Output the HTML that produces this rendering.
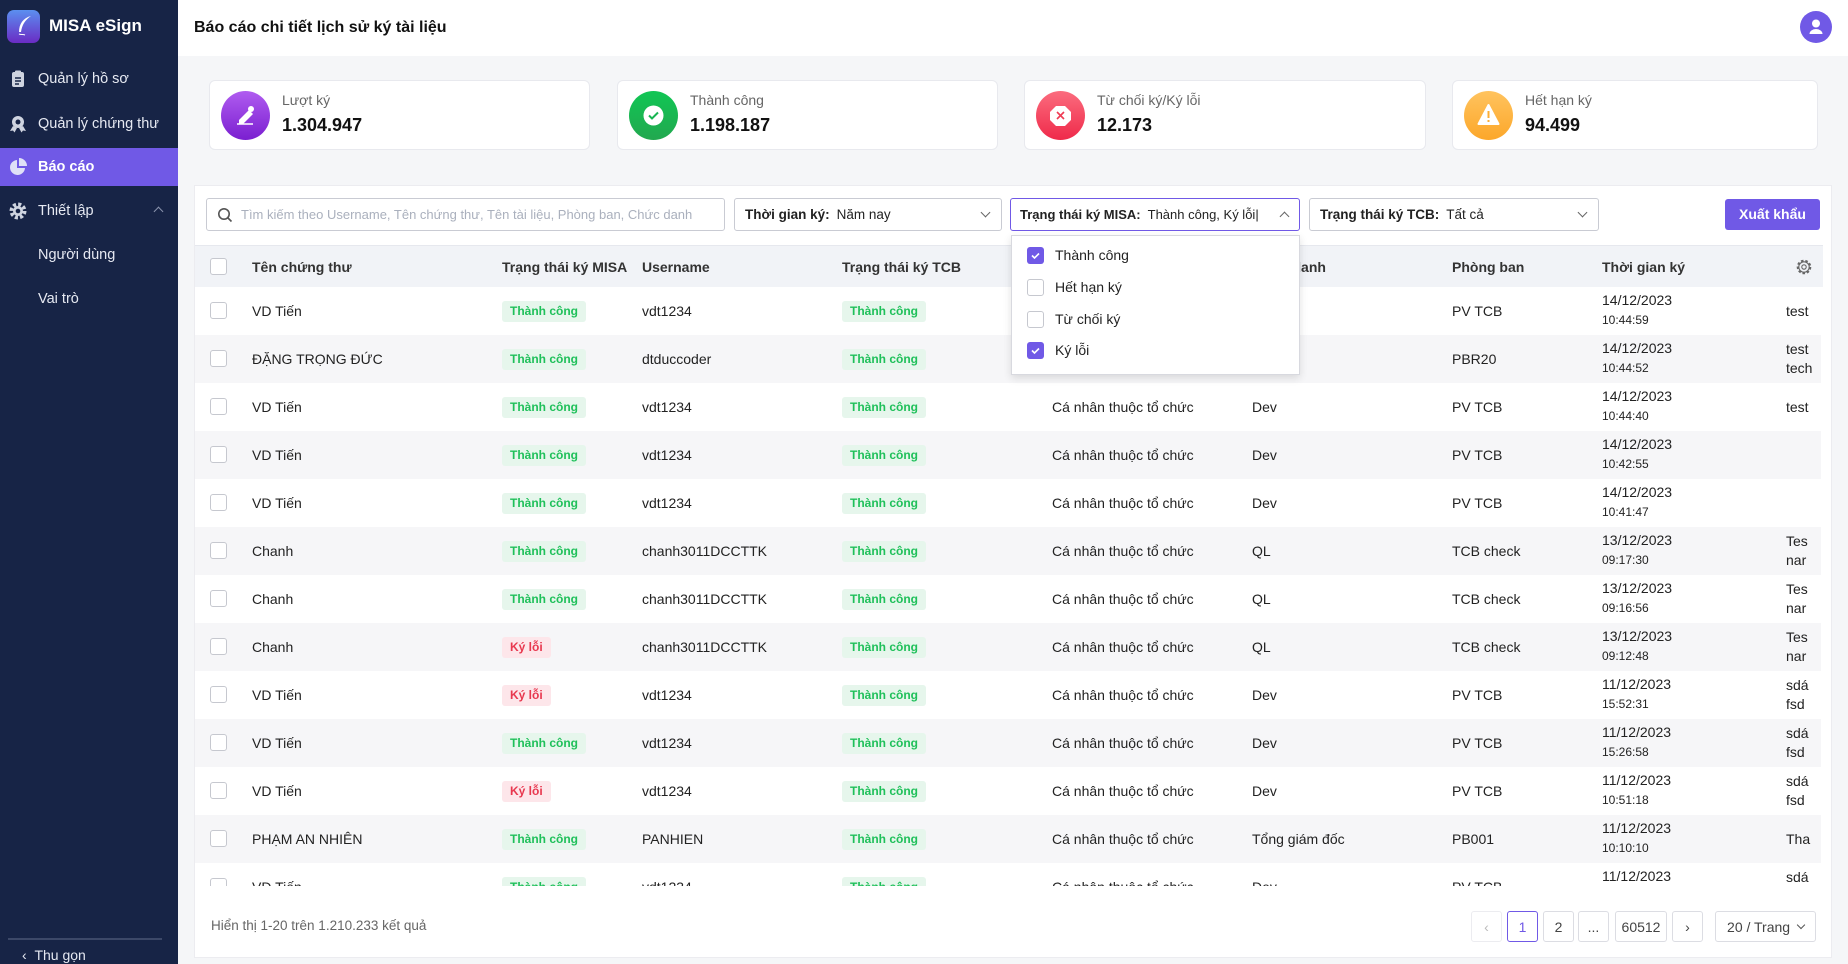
<!DOCTYPE html>
<html><head><meta charset="utf-8"><style>
*{box-sizing:border-box;margin:0;padding:0}
body{width:1848px;height:964px;overflow:hidden;background:#f5f6f8;font-family:"Liberation Sans","Noto Sans CJK SC",sans-serif;font-size:14px;color:#222;position:relative}
.a{position:absolute}
.sb{left:0;top:0;width:178px;height:964px;background:#172446;color:#e6e9f2}
.mi{position:absolute;left:0;width:178px;height:44px;display:flex;align-items:center;padding-left:38px;font-size:14.5px}
.ic{position:absolute;left:9px;top:13px;width:18px;height:18px}
.hd{left:178px;top:0;width:1670px;height:56px;background:#fff}
.card{position:absolute;top:80px;height:70px;background:#fff;border:1px solid #e8e9ee;border-radius:6px}
.circ{position:absolute;left:11px;top:10px;width:49px;height:49px;border-radius:50%}
.cl{position:absolute;left:72px;top:11px;color:#666;font-size:14px}
.cv{position:absolute;left:72px;top:34px;font-size:18px;font-weight:bold;color:#111}
.panel{left:194px;top:185px;width:1638px;height:773px;background:#fff;border:1px solid #ececf0}
.inp{position:absolute;top:198px;height:33px;border:1px solid #c9cbd3;border-radius:3px;background:#fff;display:flex;align-items:center;padding-left:10px;font-size:13.5px;white-space:nowrap;overflow:hidden}
.inp b{margin-right:7px}
.chev{position:absolute;right:12px;top:10px;width:7px;height:7px;border-right:1.3px solid #666;border-bottom:1.3px solid #666;transform:rotate(45deg)}
.cb{position:absolute;width:17px;height:17px;border:1px solid #c6c8cf;border-radius:3px;background:#fff}
.row{position:absolute;left:195px;width:1628px;height:48px}
.row span{position:absolute;white-space:nowrap}
.bd{top:14px;height:21px;padding:0 8px;border-radius:3px;font-size:12px;font-weight:bold;line-height:21px}
.g{background:#e6f6ec;color:#1fc05a}
.r{background:#fde6ea;color:#e8384f}
.th{font-weight:bold;color:#333}
.pg{position:absolute;top:911px;height:31px;border:1px solid #dcdde3;border-radius:3px;background:#fff;display:flex;align-items:center;justify-content:center;font-size:14px;color:#444}
</style></head><body>
<div class="a sb">
  <div class="a" style="left:7px;top:10px;width:33px;height:33px;border-radius:7px;background:linear-gradient(180deg,#5b8ff0,#6a2bc4)">
    <svg width="33" height="33" viewBox="0 0 33 33"><path d="M24 6C16 8 12 14 12 22l2 0C15 15 18 10 24 6z" fill="#fff"/><path d="M12 24c2 1 4 0 6 1" stroke="#fff" fill="none"/></svg>
  </div>
  <div class="a" style="left:49px;top:16px;font-size:17px;font-weight:bold;color:#fff">MISA eSign</div>
  <div class="mi" style="top:57px"><svg class="ic" viewBox="0 0 18 18"><rect x="3" y="2" width="12" height="15" rx="2" fill="#cfd4e0"/><rect x="6" y="0.5" width="6" height="3" rx="1" fill="#cfd4e0"/><path d="M6 8h6M6 11h6M6 14h4" stroke="#172446" stroke-width="1.4"/></svg>Quản lý hồ sơ</div>
  <div class="mi" style="top:102px"><svg class="ic" viewBox="0 0 18 18"><circle cx="9" cy="7" r="6" fill="#cfd4e0"/><circle cx="9" cy="7" r="2.5" fill="#172446"/><path d="M4 11l-3 5 3-.5 1.5 2L8 13M14 11l3 5-3-.5-1.5 2L10 13" fill="#cfd4e0"/></svg>Quản lý chứng thư</div>
  <div class="mi" style="top:148px;height:38px;background:#7059e6;color:#fff;font-weight:bold"><svg class="ic" style="top:10px" viewBox="0 0 18 18"><path d="M8 2A7.5 7.5 0 1 0 16 10H8z" fill="#dfe0f7"/><path d="M10 0v8h8A8 8 0 0 0 10 0z" fill="#dfe0f7"/></svg>Báo cáo</div>
  <div class="mi" style="top:189px"><svg class="ic" viewBox="0 0 18 18"><circle cx="9" cy="9" r="6.5" fill="none" stroke="#cfd4e0" stroke-width="4" stroke-dasharray="3 2.1"/><circle cx="9" cy="9" r="5" fill="#cfd4e0"/><circle cx="9" cy="9" r="2.3" fill="#172446"/></svg>Thiết lập<span style="position:absolute;left:155px;top:19px;width:7px;height:7px;border-left:1.3px solid #8a93ad;border-top:1.3px solid #8a93ad;transform:rotate(45deg)"></span></div>
  <div class="mi" style="top:233px">Người dùng</div>
  <div class="mi" style="top:277px">Vai trò</div>
  <div class="a" style="left:8px;top:938px;width:154px;height:2px;background:#3c4868"></div>
  <div class="a" style="left:22px;top:947px;font-size:14px">‹ &nbsp;Thu gọn</div>
</div>
<div class="a hd">
  <div class="a" style="left:16px;top:19px;font-size:16px;font-weight:bold;color:#111">Báo cáo chi tiết lịch sử ký tài liệu</div>
  <div class="a" style="left:1622px;top:11px;width:32px;height:32px;border-radius:50%;background:#7059e6">
    <svg width="32" height="32" viewBox="0 0 32 32"><circle cx="16" cy="12.5" r="4" fill="#fff"/><path d="M9.5 23a6.5 5 0 0 1 13 0z" fill="#fff"/></svg>
  </div>
</div>

<div class="card" style="left:209px;width:381px"><div class="circ" style="background:linear-gradient(180deg,#b05cf0,#7a1fd0)"><svg width="49" height="49" viewBox="0 0 49 49"><path d="M18 29l10-10 4 4-10 10h-4z" fill="#fff"/><circle cx="30" cy="18" r="3" fill="#fff"/><path d="M16 33h16" stroke="#fff" stroke-width="1.5"/></svg></div><div class="cl">Lượt ký</div><div class="cv">1.304.947</div></div>
<div class="card" style="left:617px;width:381px"><div class="circ" style="background:linear-gradient(180deg,#10c654,#22a84f)"><svg width="49" height="49" viewBox="0 0 49 49"><circle cx="24.5" cy="24.5" r="10" fill="#fff"/><path d="M20 24.5l3 3 6-6" stroke="#18b552" stroke-width="2" fill="none"/></svg></div><div class="cl">Thành công</div><div class="cv">1.198.187</div></div>
<div class="card" style="left:1024px;width:402px"><div class="circ" style="background:linear-gradient(180deg,#fb6c7e,#ef2a4a)"><svg width="49" height="49" viewBox="0 0 49 49"><path d="M20 15h9l6 6v8l-6 6h-9l-6-6v-8z" fill="#fff"/><path d="M21 21l7 7M28 21l-7 7" stroke="#ef3b54" stroke-width="1.6"/></svg></div><div class="cl">Từ chối ký/Ký lỗi</div><div class="cv">12.173</div></div>
<div class="card" style="left:1452px;width:366px"><div class="circ" style="background:linear-gradient(180deg,#ffc35e,#fca72a)"><svg width="49" height="49" viewBox="0 0 49 49"><path d="M24.5 14l10 19h-20z" fill="#fff" stroke="#fff" stroke-width="2" stroke-linejoin="round"/><path d="M24.5 20v7M24.5 29v2" stroke="#fcae34" stroke-width="2"/></svg></div><div class="cl">Hết hạn ký</div><div class="cv">94.499</div></div>

<div class="a panel"></div>
<div class="inp" style="left:206px;width:519px;color:#aab0bd;padding-left:34px;font-size:13px"><svg class="a" style="left:10px;top:8px" width="16" height="16" viewBox="0 0 16 16"><circle cx="7" cy="7" r="5.2" stroke="#555" stroke-width="1.6" fill="none"/><path d="M11 11l3.5 3.5" stroke="#555" stroke-width="1.6"/></svg>Tìm kiếm theo Username, Tên chứng thư, Tên tài liệu, Phòng ban, Chức danh</div>
<div class="inp" style="left:734px;width:268px"><b>Thời gian ký:</b>Năm nay<span class="chev"></span></div>
<div class="inp" style="left:1010px;width:290px;border-color:#7059e6;font-size:13px;padding-left:9px"><b>Trạng thái ký MISA:</b>Thành công, Ký lỗi|<span class="chev" style="transform:rotate(225deg);top:14px;right:11px"></span></div>
<div class="inp" style="left:1309px;width:290px"><b>Trạng thái ký TCB:</b>Tất cả<span class="chev"></span></div>
<div class="a" style="left:1725px;top:199px;width:95px;height:31px;background:#7059e6;border-radius:3px;color:#fff;font-weight:bold;font-size:14px;text-align:center;line-height:31px">Xuất khẩu</div>

<div class="a" style="left:195px;top:245px;width:1628px;height:641px;overflow:hidden">
<div style="position:relative;left:-195px;top:-245px">
<div class="row" style="top:245px;height:42px;background:#f1f3f7;border-top:1px solid #e6e8ee">
 <div class="cb" style="left:15px;top:12px"></div>
 <span class="th" style="left:57px;top:13px">Tên chứng thư</span>
 <span class="th" style="left:307px;top:13px">Trạng thái ký MISA</span>
 <span class="th" style="left:447px;top:13px">Username</span>
 <span class="th" style="left:647px;top:13px">Trạng thái ký TCB</span>
 <span class="th" style="left:857px;top:13px">Loại chứng thư</span>
 <span class="th" style="left:1057px;top:13px">Chức danh</span>
 <span class="th" style="left:1257px;top:13px">Phòng ban</span>
 <span class="th" style="left:1407px;top:13px">Thời gian ký</span>
 <svg class="a" style="left:1600px;top:12px" width="18" height="18" viewBox="0 0 18 18"><circle cx="9" cy="9" r="6" fill="none" stroke="#666" stroke-width="2.6" stroke-dasharray="2.4 1.8"/><circle cx="9" cy="9" r="5.2" fill="#f1f3f7" stroke="#666" stroke-width="1.1"/><circle cx="9" cy="9" r="2.2" fill="none" stroke="#666" stroke-width="1.1"/></svg>
</div>
</div>
</div>

<div class="a" style="left:195px;top:287px;width:1626px;height:599px;overflow:hidden">
<div style="position:relative;left:-195px;top:-287px">
<div class="row" style="top:287px;background:#fff"><div class="cb" style="left:15px;top:15px"></div><span style="left:57px;top:16px">VD Tiến</span><span class="bd g" style="left:307px">Thành công</span><span style="left:447px;top:16px">vdt1234</span><span class="bd g" style="left:647px">Thành công</span><span style="left:857px;top:16px">Cá nhân thuộc tổ chức</span><span style="left:1057px;top:16px">Dev</span><span style="left:1257px;top:16px">PV TCB</span><span style="left:1407px;top:5px">14/12/2023</span><span style="left:1407px;top:26px;font-size:12px">10:44:59</span><span style="left:1591px;top:16px">test</span></div>
<div class="row" style="top:335px;background:#f6f6f8"><div class="cb" style="left:15px;top:15px"></div><span style="left:57px;top:16px">ĐẶNG TRỌNG ĐỨC</span><span class="bd g" style="left:307px">Thành công</span><span style="left:447px;top:16px">dtduccoder</span><span class="bd g" style="left:647px">Thành công</span><span style="left:857px;top:16px">Cá nhân thuộc tổ chức</span><span style="left:1057px;top:16px">Dev</span><span style="left:1257px;top:16px">PBR20</span><span style="left:1407px;top:5px">14/12/2023</span><span style="left:1407px;top:26px;font-size:12px">10:44:52</span><span style="left:1591px;top:6px">test</span><span style="left:1591px;top:25px">tech</span></div>
<div class="row" style="top:383px;background:#fff"><div class="cb" style="left:15px;top:15px"></div><span style="left:57px;top:16px">VD Tiến</span><span class="bd g" style="left:307px">Thành công</span><span style="left:447px;top:16px">vdt1234</span><span class="bd g" style="left:647px">Thành công</span><span style="left:857px;top:16px">Cá nhân thuộc tổ chức</span><span style="left:1057px;top:16px">Dev</span><span style="left:1257px;top:16px">PV TCB</span><span style="left:1407px;top:5px">14/12/2023</span><span style="left:1407px;top:26px;font-size:12px">10:44:40</span><span style="left:1591px;top:16px">test</span></div>
<div class="row" style="top:431px;background:#f6f6f8"><div class="cb" style="left:15px;top:15px"></div><span style="left:57px;top:16px">VD Tiến</span><span class="bd g" style="left:307px">Thành công</span><span style="left:447px;top:16px">vdt1234</span><span class="bd g" style="left:647px">Thành công</span><span style="left:857px;top:16px">Cá nhân thuộc tổ chức</span><span style="left:1057px;top:16px">Dev</span><span style="left:1257px;top:16px">PV TCB</span><span style="left:1407px;top:5px">14/12/2023</span><span style="left:1407px;top:26px;font-size:12px">10:42:55</span></div>
<div class="row" style="top:479px;background:#fff"><div class="cb" style="left:15px;top:15px"></div><span style="left:57px;top:16px">VD Tiến</span><span class="bd g" style="left:307px">Thành công</span><span style="left:447px;top:16px">vdt1234</span><span class="bd g" style="left:647px">Thành công</span><span style="left:857px;top:16px">Cá nhân thuộc tổ chức</span><span style="left:1057px;top:16px">Dev</span><span style="left:1257px;top:16px">PV TCB</span><span style="left:1407px;top:5px">14/12/2023</span><span style="left:1407px;top:26px;font-size:12px">10:41:47</span></div>
<div class="row" style="top:527px;background:#f6f6f8"><div class="cb" style="left:15px;top:15px"></div><span style="left:57px;top:16px">Chanh</span><span class="bd g" style="left:307px">Thành công</span><span style="left:447px;top:16px">chanh3011DCCTTK</span><span class="bd g" style="left:647px">Thành công</span><span style="left:857px;top:16px">Cá nhân thuộc tổ chức</span><span style="left:1057px;top:16px">QL</span><span style="left:1257px;top:16px">TCB check</span><span style="left:1407px;top:5px">13/12/2023</span><span style="left:1407px;top:26px;font-size:12px">09:17:30</span><span style="left:1591px;top:6px">Tes</span><span style="left:1591px;top:25px">nar</span></div>
<div class="row" style="top:575px;background:#fff"><div class="cb" style="left:15px;top:15px"></div><span style="left:57px;top:16px">Chanh</span><span class="bd g" style="left:307px">Thành công</span><span style="left:447px;top:16px">chanh3011DCCTTK</span><span class="bd g" style="left:647px">Thành công</span><span style="left:857px;top:16px">Cá nhân thuộc tổ chức</span><span style="left:1057px;top:16px">QL</span><span style="left:1257px;top:16px">TCB check</span><span style="left:1407px;top:5px">13/12/2023</span><span style="left:1407px;top:26px;font-size:12px">09:16:56</span><span style="left:1591px;top:6px">Tes</span><span style="left:1591px;top:25px">nar</span></div>
<div class="row" style="top:623px;background:#f6f6f8"><div class="cb" style="left:15px;top:15px"></div><span style="left:57px;top:16px">Chanh</span><span class="bd r" style="left:307px">Ký lỗi</span><span style="left:447px;top:16px">chanh3011DCCTTK</span><span class="bd g" style="left:647px">Thành công</span><span style="left:857px;top:16px">Cá nhân thuộc tổ chức</span><span style="left:1057px;top:16px">QL</span><span style="left:1257px;top:16px">TCB check</span><span style="left:1407px;top:5px">13/12/2023</span><span style="left:1407px;top:26px;font-size:12px">09:12:48</span><span style="left:1591px;top:6px">Tes</span><span style="left:1591px;top:25px">nar</span></div>
<div class="row" style="top:671px;background:#fff"><div class="cb" style="left:15px;top:15px"></div><span style="left:57px;top:16px">VD Tiến</span><span class="bd r" style="left:307px">Ký lỗi</span><span style="left:447px;top:16px">vdt1234</span><span class="bd g" style="left:647px">Thành công</span><span style="left:857px;top:16px">Cá nhân thuộc tổ chức</span><span style="left:1057px;top:16px">Dev</span><span style="left:1257px;top:16px">PV TCB</span><span style="left:1407px;top:5px">11/12/2023</span><span style="left:1407px;top:26px;font-size:12px">15:52:31</span><span style="left:1591px;top:6px">sdá</span><span style="left:1591px;top:25px">fsd</span></div>
<div class="row" style="top:719px;background:#f6f6f8"><div class="cb" style="left:15px;top:15px"></div><span style="left:57px;top:16px">VD Tiến</span><span class="bd g" style="left:307px">Thành công</span><span style="left:447px;top:16px">vdt1234</span><span class="bd g" style="left:647px">Thành công</span><span style="left:857px;top:16px">Cá nhân thuộc tổ chức</span><span style="left:1057px;top:16px">Dev</span><span style="left:1257px;top:16px">PV TCB</span><span style="left:1407px;top:5px">11/12/2023</span><span style="left:1407px;top:26px;font-size:12px">15:26:58</span><span style="left:1591px;top:6px">sdá</span><span style="left:1591px;top:25px">fsd</span></div>
<div class="row" style="top:767px;background:#fff"><div class="cb" style="left:15px;top:15px"></div><span style="left:57px;top:16px">VD Tiến</span><span class="bd r" style="left:307px">Ký lỗi</span><span style="left:447px;top:16px">vdt1234</span><span class="bd g" style="left:647px">Thành công</span><span style="left:857px;top:16px">Cá nhân thuộc tổ chức</span><span style="left:1057px;top:16px">Dev</span><span style="left:1257px;top:16px">PV TCB</span><span style="left:1407px;top:5px">11/12/2023</span><span style="left:1407px;top:26px;font-size:12px">10:51:18</span><span style="left:1591px;top:6px">sdá</span><span style="left:1591px;top:25px">fsd</span></div>
<div class="row" style="top:815px;background:#f6f6f8"><div class="cb" style="left:15px;top:15px"></div><span style="left:57px;top:16px">PHẠM AN NHIÊN</span><span class="bd g" style="left:307px">Thành công</span><span style="left:447px;top:16px">PANHIEN</span><span class="bd g" style="left:647px">Thành công</span><span style="left:857px;top:16px">Cá nhân thuộc tổ chức</span><span style="left:1057px;top:16px">Tổng giám đốc</span><span style="left:1257px;top:16px">PB001</span><span style="left:1407px;top:5px">11/12/2023</span><span style="left:1407px;top:26px;font-size:12px">10:10:10</span><span style="left:1591px;top:16px">Tha</span></div>
<div class="row" style="top:863px;background:#fff"><div class="cb" style="left:15px;top:15px"></div><span style="left:57px;top:16px">VD Tiến</span><span class="bd g" style="left:307px">Thành công</span><span style="left:447px;top:16px">vdt1234</span><span class="bd g" style="left:647px">Thành công</span><span style="left:857px;top:16px">Cá nhân thuộc tổ chức</span><span style="left:1057px;top:16px">Dev</span><span style="left:1257px;top:16px">PV TCB</span><span style="left:1407px;top:5px">11/12/2023</span><span style="left:1591px;top:6px">sdá</span></div>
</div>
</div>

<div class="a" style="left:1011px;top:235px;width:289px;height:140px;background:#fff;border:1px solid #d8d9df;box-shadow:0 3px 8px rgba(0,0,0,.12)">
  <div class="a" style="left:15px;top:11px;width:17px;height:17px;border-radius:3px;background:#7059e6"><svg width="17" height="17" viewBox="0 0 17 17"><path d="M5 8.5l2.5 2.5 4.5-4.5" stroke="#fff" stroke-width="1.6" fill="none"/></svg></div>
  <div class="a" style="left:43px;top:11px;font-size:14px">Thành công</div>
  <div class="cb" style="left:15px;top:43px"></div>
  <div class="a" style="left:43px;top:43px;font-size:14px">Hết hạn ký</div>
  <div class="cb" style="left:15px;top:75px"></div>
  <div class="a" style="left:43px;top:75px;font-size:14px">Từ chối ký</div>
  <div class="a" style="left:15px;top:106px;width:17px;height:17px;border-radius:3px;background:#7059e6"><svg width="17" height="17" viewBox="0 0 17 17"><path d="M5 8.5l2.5 2.5 4.5-4.5" stroke="#fff" stroke-width="1.6" fill="none"/></svg></div>
  <div class="a" style="left:43px;top:106px;font-size:14px">Ký lỗi</div>
</div>

<div class="a" style="left:211px;top:918px;color:#666;font-size:13.5px">Hiển thị 1-20 trên 1.210.233 kết quả</div>
<div class="pg" style="left:1471px;width:31px;color:#bbb;border-color:#ececf0">‹</div>
<div class="pg" style="left:1507px;width:31px;border-color:#7059e6;color:#7059e6">1</div>
<div class="pg" style="left:1543px;width:31px">2</div>
<div class="pg" style="left:1578px;width:31px">...</div>
<div class="pg" style="left:1615px;width:52px">60512</div>
<div class="pg" style="left:1672px;width:31px">›</div>
<div class="pg" style="left:1715px;width:101px">20 / Trang&nbsp;<span style="display:inline-block;width:6px;height:6px;border-right:1.2px solid #555;border-bottom:1.2px solid #555;transform:rotate(45deg);margin:-4px 0 0 4px"></span></div>
</body></html>
